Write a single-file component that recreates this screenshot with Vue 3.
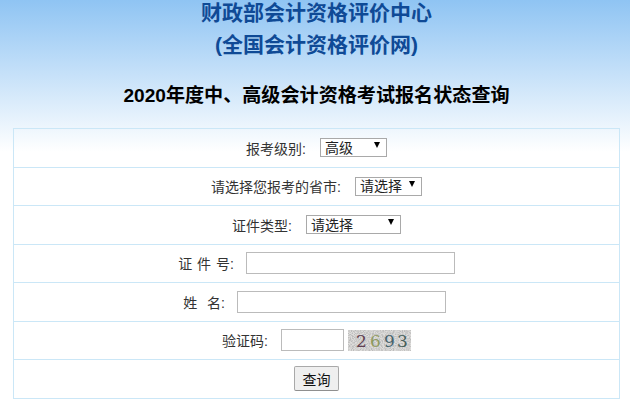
<script setup>
const rows = [
  { label: "报考级别:", options: ["高级"], selectClass: "sel-level" },
  { label: "请选择您报考的省市:", options: ["请选择"], selectClass: "sel-province" },
  { label: "证件类型:", options: ["请选择"], selectClass: "sel-type" },
]
</script>

<template>
  <main class="page">
    <h1 class="org">财政部会计资格评价中心<br>(全国会计资格评价网)</h1>
    <h2 class="title">2020年度中、高级会计资格考试报名状态查询</h2>

    <div class="form-table">
      <div v-for="row in rows" :key="row.label" class="row">
        <span class="label">{{ row.label }}</span>
        <span class="select-wrap" :class="row.selectClass">
          <select>
            <option v-for="o in row.options" :key="o">{{ o }}</option>
          </select>
        </span>
      </div>
      <div class="row id-row">
        <span class="label spaced">证 件 号:</span>
        <input class="text-input" type="text">
      </div>
      <div class="row name-row">
        <span class="label spaced">姓&nbsp;&nbsp;名:</span>
        <input class="text-input" type="text">
      </div>
      <div class="row code-row">
        <span class="label">验证码:</span>
        <input class="code-input" type="text">
        <svg class="captcha" width="63" height="21" viewBox="0 0 63 21">
          <filter id="noise" x="0" y="0" width="100%" height="100%">
            <feTurbulence type="fractalNoise" baseFrequency="0.9" numOctaves="2" seed="4" />
            <feColorMatrix type="matrix" values="0 0 0 0 0.5  0 0 0 0 0.5  0 0 0 0 0.5  3 0 0 0 -1.1" />
          </filter>
          <rect width="63" height="21" fill="#dedddb" />
          <rect width="63" height="21" filter="url(#noise)" />
          <text x="8" y="17" fill="#5f4050">2</text>
          <text x="22" y="17" fill="#8f9a60">6</text>
          <text x="36" y="17" fill="#47646e">9</text>
          <text x="49" y="17" fill="#47605a">3</text>
        </svg>
      </div>
      <div class="row submit-row">
        <button class="submit" type="button">查询</button>
      </div>
    </div>
  </main>
</template>

<style scoped>
.page {
  height: 403px;
  overflow: hidden;
  padding: 0 10px 0 13px;
  box-sizing: border-box;
  background: linear-gradient(#8fc4f3 0, #ffffff 152px);
  font-family: "Liberation Sans", "Noto Sans CJK SC", sans-serif;
}

.org {
  margin: -3px 0 0;
  font-size: 21px;
  line-height: 31.5px;
  font-weight: 700;
  color: #0f4a96;
  text-align: center;
}

.title {
  margin: 22px 0 0;
  font-size: 19.1px;
  line-height: 28px;
  font-weight: 700;
  color: #000;
  text-align: center;
}

.form-table {
  margin-top: 18px;
  border: 1px solid #cbe7f7;
  border-bottom: 0;
}

.row {
  height: 38.5px;
  box-sizing: border-box;
  border-bottom: 1px solid #cbe7f7;
  display: flex;
  align-items: center;
  justify-content: center;
}

.label {
  font-size: 14px;
  color: #333;
  margin-right: 14px;
  white-space: pre;
}

.id-row .label,
.name-row .label {
  margin-right: 12px;
}

.name-row {
  padding-right: 4px;
}

.code-row .label {
  margin-right: 13px;
}

.spaced {
  word-spacing: 1px;
}

.select-wrap {
  position: relative;
  display: block;
  height: 19px;
}

.select-wrap::after {
  content: "";
  position: absolute;
  right: 7px;
  top: 4px;
  border-left: 3.5px solid transparent;
  border-right: 3.5px solid transparent;
  border-top: 6px solid #000;
  pointer-events: none;
}

select {
  appearance: none;
  display: block;
  width: 100%;
  height: 19px;
  margin: 0;
  padding: 0 0 0 4px;
  background: #fff;
  border: 1px solid #a9a9a9;
  border-radius: 0;
  font: 14px "Liberation Sans", "Noto Sans CJK SC", sans-serif;
  color: #222;
}

.sel-level { width: 67px; }
.sel-province { width: 67px; }
.sel-type { width: 95px; }

.text-input {
  width: 209px;
  height: 22px;
  box-sizing: border-box;
  background: #fff;
  border: 1px solid #bbb;
  margin: 0;
  padding: 0;
}

.code-input {
  width: 63px;
  height: 22px;
  box-sizing: border-box;
  background: #fff;
  border: 1px solid #bbb;
  margin: 0;
  padding: 0;
}

.captcha {
  margin-left: 4px;
  display: block;
}

.captcha text {
  font: 400 17px "DejaVu Serif", serif;
}

.submit {
  width: 45px;
  height: 25px;
  padding: 0;
  background: #efefef;
  border: 1px solid #a9a9a9;
  border-bottom-color: #8f8f8f;
  border-radius: 2px;
  font: 14px "Liberation Sans", "Noto Sans CJK SC", sans-serif;
  color: #111;
}
</style>
